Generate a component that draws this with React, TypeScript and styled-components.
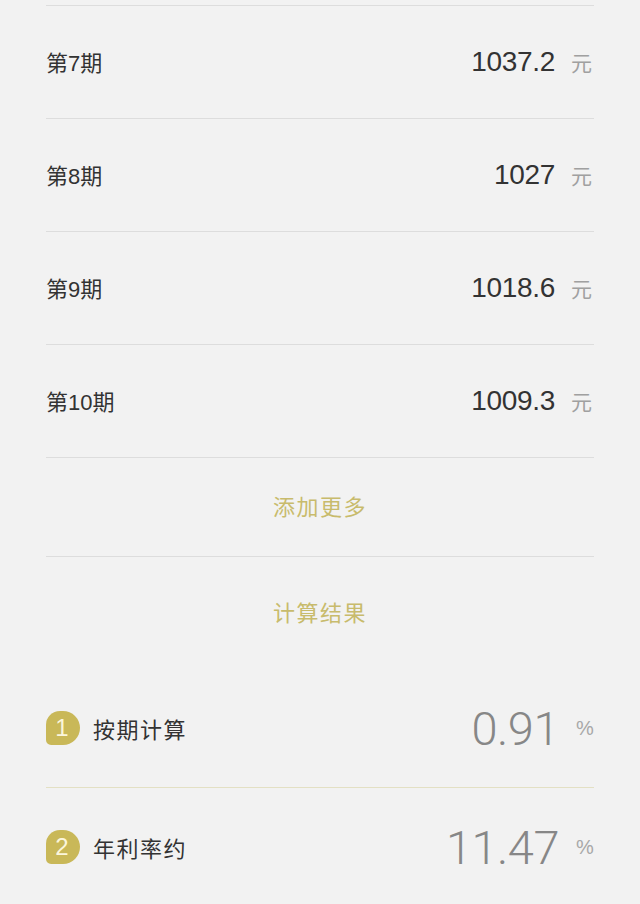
import React from "react";
import styled, { createGlobalStyle } from "styled-components";

const Global = createGlobalStyle`
  html, body { margin: 0; padding: 0; background: #f2f2f2; }
  body { font-family: "Liberation Sans", "Noto Sans CJK SC", sans-serif; }
`;

const Page = styled.div`
  width: 640px;
  height: 904px;
  overflow: hidden;
  padding: 5px 46px 0;
  box-sizing: border-box;
  background: #f2f2f2;
`;

const List = styled.div`
  border-top: 1px solid #dddddd;
`;

const Row = styled.div`
  height: 112px;
  border-bottom: 1px solid #dddddd;
  display: flex;
  align-items: center;
  justify-content: space-between;
`;

const Label = styled.span`
  font-family: "Liberation Sans", "Noto Sans CJK SC", sans-serif;
  font-size: 22px;
  color: #333333;
  margin-top: -2px;
`;

const ValueGroup = styled.div`
  display: flex;
  align-items: center;
`;

const Amount = styled.span`
  font-family: "Liberation Sans", sans-serif;
  font-size: 28px;
  color: #333333;
  letter-spacing: -0.3px;
`;

const Unit = styled.span`
  font-family: "Noto Sans CJK SC", sans-serif;
  font-size: 21px;
  color: #a0a0a0;
  margin-left: 16px;
  width: 23px;
`;

const ActionRow = styled.div<{ $border?: boolean; $h: number }>`
  height: ${(p) => p.$h}px;
  border-bottom: ${(p) => (p.$border ? "1px solid #dddddd" : "none")};
  display: flex;
  align-items: center;
  justify-content: center;
  font-family: "Noto Sans CJK SC", sans-serif;
  font-size: 22px;
  letter-spacing: 1.5px;
  color: #c8bb6c;
  padding-bottom: 4px;
  box-sizing: border-box;
`;

const ResultRow = styled.div<{ $border?: boolean }>`
  height: 118px;
  border-bottom: ${(p) => (p.$border ? "1px solid #e3e0c4" : "none")};
  display: flex;
  align-items: center;
  justify-content: space-between;
`;

const ResultLeft = styled.div`
  display: flex;
  align-items: center;
  gap: 13px;
`;

const Badge = styled.span`
  width: 34px;
  height: 34px;
  flex: 0 0 34px;
  background: #c9b858;
  border-radius: 14px 17px 17px 5px;
  color: #fbf6dc;
  font-family: "Liberation Sans", sans-serif;
  font-size: 24px;
  line-height: 34px;
  text-align: center;
  padding-right: 2px;
  box-sizing: border-box;
`;

const ResultLabel = styled.span`
  font-family: "Noto Sans CJK SC", sans-serif;
  font-size: 22px;
  letter-spacing: 1.5px;
  color: #333333;
`;

const BigValue = styled.span`
  font-family: "Roboto", "Liberation Sans", sans-serif;
  font-weight: 300;
  font-size: 47px;
  color: #878787;
  letter-spacing: -0.5px;
`;

const Percent = styled.span`
  font-family: "Liberation Sans", sans-serif;
  font-size: 20px;
  color: #a8a8a8;
  margin-left: 17px;
  width: 18px;
`;

const rows = [
  { label: "第7期", value: "1037.2" },
  { label: "第8期", value: "1027" },
  { label: "第9期", value: "1018.6" },
  { label: "第10期", value: "1009.3" },
];

const results = [
  { n: "1", label: "按期计算", value: "0.91" },
  { n: "2", label: "年利率约", value: "11.47" },
];

export default function App() {
  return (
    <>
      <Global />
      <Page>
        <List>
          {rows.map((r) => (
            <Row key={r.label}>
              <Label>{r.label}</Label>
              <ValueGroup>
                <Amount>{r.value}</Amount>
                <Unit>元</Unit>
              </ValueGroup>
            </Row>
          ))}
          <ActionRow $border $h={99}>添加更多</ActionRow>
          <ActionRow $h={112}>计算结果</ActionRow>
          {results.map((r, i) => (
            <ResultRow key={r.n} $border={i === 0}>
              <ResultLeft>
                <Badge>{r.n}</Badge>
                <ResultLabel>{r.label}</ResultLabel>
              </ResultLeft>
              <ValueGroup>
                <BigValue>{r.value}</BigValue>
                <Percent>%</Percent>
              </ValueGroup>
            </ResultRow>
          ))}
        </List>
      </Page>
    </>
  );
}
